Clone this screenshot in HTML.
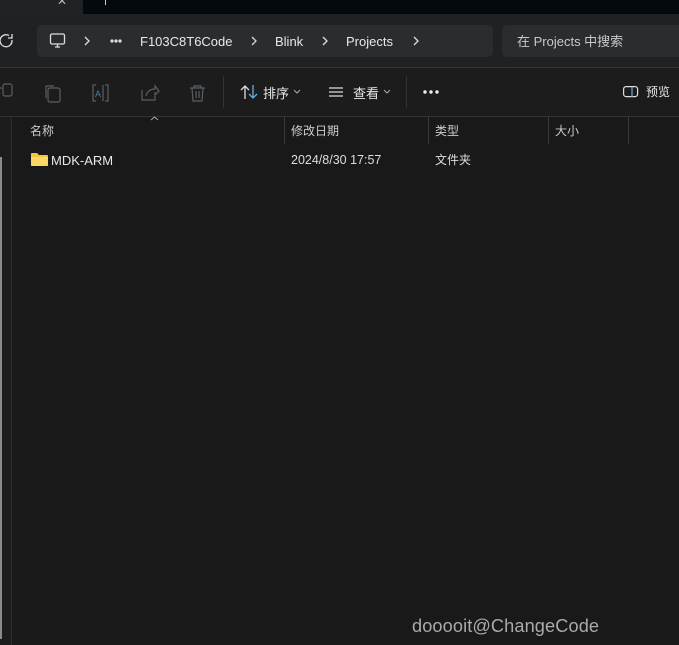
<!DOCTYPE html>
<html><head><meta charset="utf-8"><style>
*{margin:0;padding:0;box-sizing:border-box}
body{width:679px;height:645px;overflow:hidden;background:#191919;font-family:"Liberation Sans","Noto Sans CJK SC",sans-serif;color:#e8e8e8;position:relative}
.a{position:absolute}
.t{font-size:13px;white-space:nowrap}
</style></head><body>
<div class="a" style="left:0;top:0;width:679px;height:14px;background:#03090d"></div>
<div class="a" style="left:0;top:0;width:83px;height:14px;background:#1f2326"></div>
<div class="a t" style="left:57px;top:-6px;color:#bbb;font-size:12px">✕</div>
<div class="a" style="left:105px;top:0;width:1px;height:5px;background:#ccc"></div>
<div class="a" style="left:0;top:14px;width:679px;height:53px;background:#1f2123"></div>
<svg class="a" style="left:0;top:33px" width="14" height="16" fill="none" stroke="#ddd" stroke-width="1.3"><path d="M9 2.5A6 6 0 1 0 12 7M12 1v4H8"/></svg>
<div class="a" style="left:37px;top:25px;width:456px;height:32px;background:#2a2d2f;border-radius:5px"></div>
<div class="a" style="left:502px;top:25px;width:190px;height:32px;background:#2a2d2f;border-radius:5px"></div>
<svg class="a" style="left:49px;top:32px" width="18" height="18" viewBox="0 0 18 18" fill="none" stroke="#ddd" stroke-width="1.3"><rect x="1.5" y="2" width="14" height="10" rx="1.5"/><path d="M6 15h5M8.5 12v3"/></svg>
<svg class="a" style="left:0;top:35px" width="430" height="12" fill="none" stroke="#ddd" stroke-width="1.3"><path d="M85 2l4 4-4 4M252 2l4 4-4 4M323 2l4 4-4 4M414 2l4 4-4 4"/><circle cx="112" cy="6" r="1" fill="#ddd"/><circle cx="116" cy="6" r="1" fill="#ddd"/><circle cx="120" cy="6" r="1" fill="#ddd"/></svg>
<div class="a t" style="left:140px;top:34px">F103C8T6Code</div>
<div class="a t" style="left:275px;top:34px">Blink</div>
<div class="a t" style="left:346px;top:34px">Projects</div>
<div class="a t" style="left:517px;top:31px;color:#c8c8c8">在 Projects 中搜索</div>
<div class="a" style="left:0;top:67px;width:679px;height:1px;background:#333"></div>
<div class="a" style="left:0;top:68px;width:679px;height:48px;background:#1c1c1c"></div>
<svg class="a" style="left:0;top:82px" width="220" height="22" fill="none" stroke="#5a5f63" stroke-width="1.2">
<rect x="3" y="2" width="9" height="12" rx="2"/><path d="M0 6h2"/>
<rect x="48" y="6" width="12" height="14" rx="2"/><path d="M46 16V4h8"/>
<path d="M96 3h-3v16h3M105 3h3v16h-3M103 3v16"/><text x="95" y="15" font-size="9" fill="#4f7d9c" stroke="none">A</text>
<path d="M142 8v10h13v-4M146 14c1-5 5-7 9-7v-3l4 5-4 4v-3"/>
<path d="M190 6h15M194 6v-2h7v2M192 6l1 13h9l1-13M196 9v7M199 9v7"/>
</svg>
<div class="a" style="left:223px;top:76px;width:1px;height:32px;background:#333"></div>
<svg class="a" style="left:240px;top:84px" width="18" height="16" fill="none" stroke-width="1.3"><path d="M5 15V2M1 6l4-4 4 4" stroke="#ddd"/><path d="M13 1v13M9 10l4 4 4-4" stroke="#5fb2e6"/></svg>
<div class="a t" style="left:263px;top:83px">排序</div>
<svg class="a" style="left:293px;top:89px" width="8" height="6" fill="none" stroke="#aaa"><path d="M1 1l3 3 3-3"/></svg>
<svg class="a" style="left:328px;top:86px" width="16" height="12" stroke="#ddd" stroke-width="1.2"><path d="M1 2h14M1 6h14M1 10h14"/></svg>
<div class="a t" style="left:353px;top:83px">查看</div>
<svg class="a" style="left:383px;top:89px" width="8" height="6" fill="none" stroke="#aaa"><path d="M1 1l3 3 3-3"/></svg>
<div class="a" style="left:406px;top:76px;width:1px;height:32px;background:#333"></div>
<svg class="a" style="left:422px;top:89px" width="18" height="6" fill="#eee"><circle cx="3" cy="3" r="1.7"/><circle cx="9" cy="3" r="1.7"/><circle cx="15" cy="3" r="1.7"/></svg>
<svg class="a" style="left:623px;top:86px" width="16" height="12" fill="none" stroke-width="1.2"><rect x="0.6" y="0.6" width="14" height="10" rx="2.5" stroke="#ddd"/><path d="M9 1v10" stroke="#5fb2e6"/></svg>
<div class="a t" style="left:646px;top:83px;font-size:12px">预览</div>
<div class="a" style="left:0;top:116px;width:679px;height:1px;background:#333"></div>
<div class="a" style="left:0;top:117px;width:11px;height:528px;background:#1c1c1c"></div>
<div class="a" style="left:11px;top:117px;width:1px;height:528px;background:#2e2e2e"></div>
<div class="a" style="left:0;top:157px;width:2px;height:482px;background:#8a8a8a"></div>
<svg class="a" style="left:150px;top:116px" width="9" height="5" fill="none" stroke="#aaa"><path d="M1 4l3.5-3 3.5 3"/></svg>
<div class="a t" style="left:30px;top:122px;font-size:12px;color:#ccc">名称</div>
<div class="a" style="left:284px;top:117px;width:1px;height:27px;background:#3a3a3a"></div>
<div class="a t" style="left:291px;top:122px;font-size:12px;color:#ccc">修改日期</div>
<div class="a" style="left:428px;top:117px;width:1px;height:27px;background:#3a3a3a"></div>
<div class="a t" style="left:435px;top:122px;font-size:12px;color:#ccc">类型</div>
<div class="a" style="left:548px;top:117px;width:1px;height:27px;background:#3a3a3a"></div>
<div class="a t" style="left:555px;top:122px;font-size:12px;color:#ccc">大小</div>
<div class="a" style="left:628px;top:117px;width:1px;height:27px;background:#3a3a3a"></div>
<svg class="a" style="left:31px;top:152px" width="17" height="14"><path d="M0 2a1 1 0 0 1 1-1h5l2 2h8a1 1 0 0 1 1 1v9a1 1 0 0 1-1 1H1a1 1 0 0 1-1-1z" fill="#f4c542"/><path d="M0 5h17v8a1 1 0 0 1-1 1H1a1 1 0 0 1-1-1z" fill="#fbd865"/></svg>
<div class="a t" style="left:51px;top:153px">MDK-ARM</div>
<div class="a t" style="left:291px;top:153px;font-size:12.5px;color:#ddd">2024/8/30 17:57</div>
<div class="a t" style="left:435px;top:151px;font-size:12px;color:#ddd">文件夹</div>
<div class="a t" style="left:412px;top:616px;font-size:18.2px;color:#aaa;letter-spacing:0.1px">dooooit@ChangeCode</div>
</body></html>
